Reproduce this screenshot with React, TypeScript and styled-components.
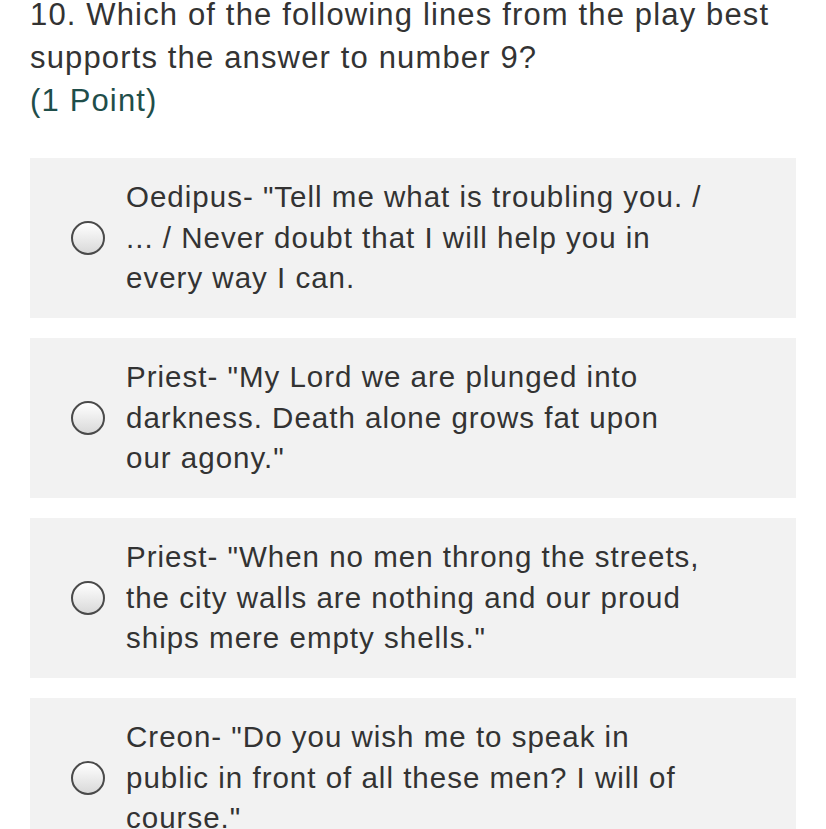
import React from "react";
import styled, { createGlobalStyle } from "styled-components";

const Global = createGlobalStyle`
  html, body { margin: 0; padding: 0; background: #ffffff; }
  body { font-family: "Liberation Sans", Arial, sans-serif; overflow: hidden; }
`;

const Page = styled.div`
  padding: 0 30px;
  height: 829px;
  overflow: hidden;
`;

const Question = styled.div`
  margin-top: -7px;
  font-size: 31px;
  line-height: 43px;
  letter-spacing: 1.15px;
  color: #333333;
  width: 766px;
`;

const Points = styled.div`
  color: #1f4e4a;
`;

const Options = styled.div`
  margin-top: 36px;
  display: flex;
  flex-direction: column;
  gap: 20px;
`;

const Card = styled.label`
  display: flex;
  align-items: center;
  gap: 21px;
  background: #f2f2f2;
  padding: 19px 0 19px 41px;
  min-height: 122px;
`;

const Radio = styled.span`
  flex: 0 0 auto;
  width: 30px;
  height: 30px;
  border-radius: 50%;
  border: 2.5px solid #4a4a4a;
  background: linear-gradient(#ffffff, #d9d9d9);
  box-sizing: content-box;
`;

const OptionText = styled.span`
  font-size: 29.5px;
  line-height: 40.5px;
  letter-spacing: 1px;
  color: #333333;
  width: 582px;
`;

const options = [
  'Oedipus- "Tell me what is troubling you. / ... / Never doubt that I will help you in every way I can.',
  'Priest- "My Lord we are plunged into darkness. Death alone grows fat upon our agony."',
  'Priest- "When no men throng the streets, the city walls are nothing and our proud ships mere empty shells."',
  'Creon- "Do you wish me to speak in public in front of all these men? I will of course."',
];

export default function App() {
  return (
    <>
      <Global />
      <Page>
        <Question>
          10. Which of the following lines from the play best supports the answer to number 9?
          <Points>(1 Point)</Points>
        </Question>
        <Options>
          {options.map((o) => (
            <Card key={o}>
              <Radio />
              <OptionText>{o}</OptionText>
            </Card>
          ))}
        </Options>
      </Page>
    </>
  );
}
